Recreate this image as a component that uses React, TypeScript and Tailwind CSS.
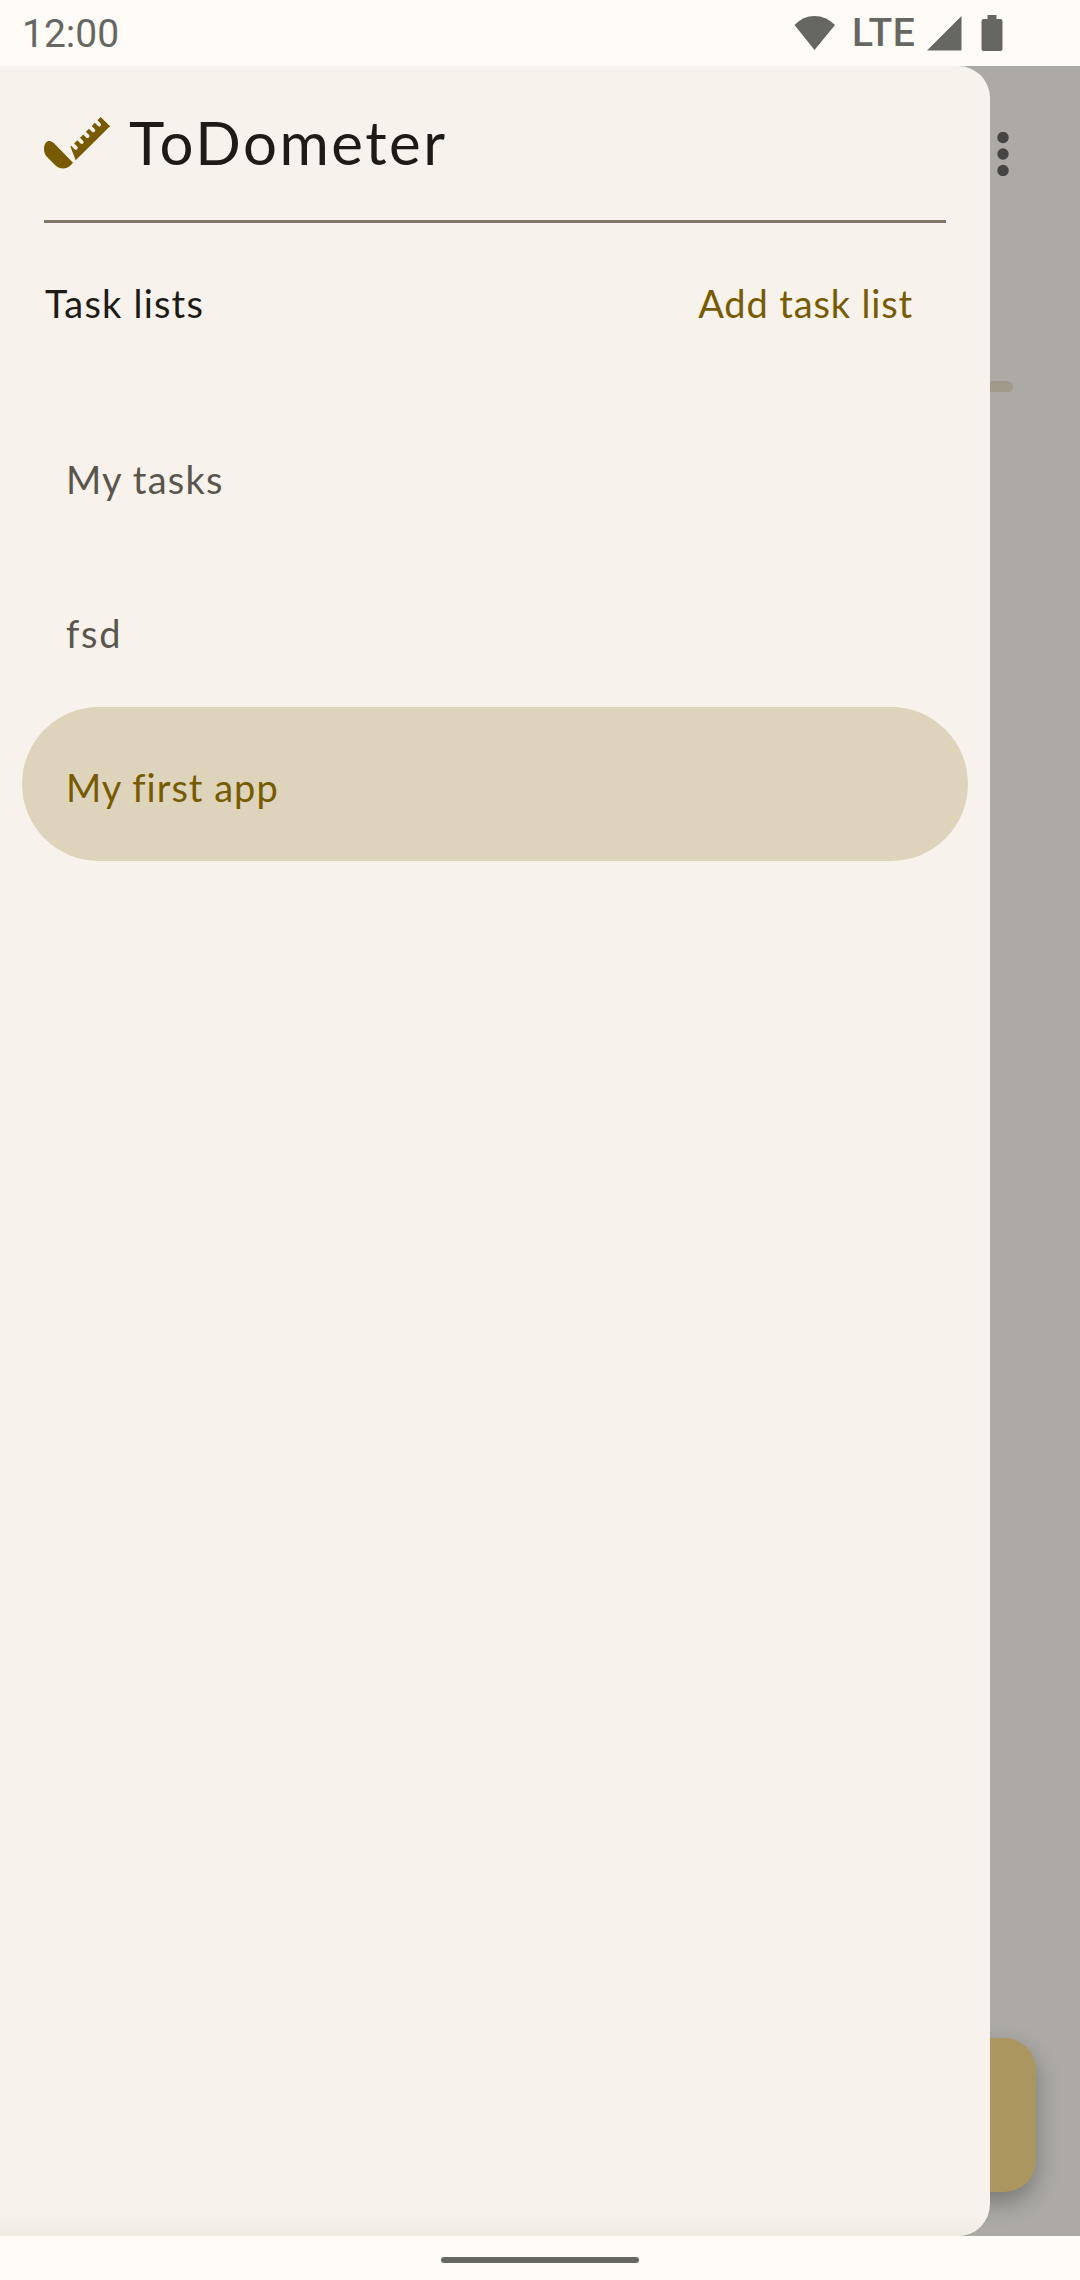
const quick = "font-['Lato',sans-serif]";

function LogoIcon() {
  return (
    <svg className="h-[52px] w-[66px] shrink-0 fill-[#785a00]" viewBox="42 51 198 156">
      <path d="M42 147C42 131 50 123 58 123C64 123 68 126 72 130L129 188L122 196C108 209 90 209 76 196L52 172C45 165 42 157 42 147Z" />
      <path d="M137 181L240 79L212 51l-9.500 9.500l9 9c5 6-2 13-8 8l-9-9l-9.500 9.500l9 9c5 6-2 13-8 8l-9-9l-9.500 9.500l9 9c5 6-2 13-8 8l-9-9l-9.500 9.500l9 9c5 6-2 13-8 8l-9-9l-9.500 9.500l9 9c5 6-2 13-8 8l-11-11l-1 4Z" />
    </svg>
  );
}

function StatusBar() {
  return (
    <header className="flex h-[66px] shrink-0 items-center pl-[22px] pr-[77px] font-['Roboto',sans-serif] text-[#666663]">
      <span className="pt-[3px] text-[39px] leading-none">12:00</span>
      <div className="ml-auto flex items-center">
        <svg className="h-[36px] w-[42px] fill-current" viewBox="0 0 42 36">
          <path d="M.5 10Q9 1 20.500 1T41 10L20.500 35Z" />
        </svg>
        <span className="ml-[16px] w-[68px] text-[39px] font-medium leading-none tracking-[0.300px]">LTE</span>
        <svg className="ml-[7px] h-[36px] w-[35px] fill-current" viewBox="0 0 35 36">
          <path d="M0 35.500L34.500 1V35.500Z" />
        </svg>
        <svg className="ml-[19px] h-[36px] w-[22px] fill-current" viewBox="0 0 22 36">
          <path d="M6.500 0h9v4H19.500a2 2 0 0 1 2 2v28a2 2 0 0 1-2 2h-17a2 2 0 0 1-2-2v-28a2 2 0 0 1 2-2h4Z" />
        </svg>
      </div>
    </header>
  );
}

const lists = [
  { name: "My tasks", spacing: "tracking-[1.200px]", selected: false },
  { name: "fsd", spacing: "tracking-[1.700px]", selected: false },
  { name: "My first app", spacing: "tracking-[1px]", selected: true },
];

function Drawer() {
  return (
    <aside className={`absolute inset-y-0 left-0 w-[990px] overflow-hidden rounded-r-[32px] bg-[#f7f2eb] ${quick}`}>
      <div className="mx-[44px] flex h-[157px] items-center border-b-[3px] border-[#7f7667]">
        <LogoIcon />
        <h1 className="ml-[19px] pb-[3px] text-[60px] leading-none tracking-[2.500px] text-[#1e1b16]">ToDometer</h1>
      </div>
      <div className="flex h-[176px] items-center justify-between pl-[45px] pr-[77px] pb-[17px] text-[38px] leading-none">
        <h2 className="tracking-[1.200px] text-[#1e1b16]">Task lists</h2>
        <button className="tracking-[0.850px] text-[#785a00]">Add task list</button>
      </div>
      <nav className="px-[22px]">
        {lists.map((l) => (
          <div
            key={l.name}
            className={`flex h-[154px] items-center rounded-full px-[44px] pt-[6px] text-[38px] leading-none ${l.spacing} ${
              l.selected ? "bg-[#ded4bc] text-[#785a00]" : "text-[#5a564e]"
            }`}
          >
            {l.name}
          </div>
        ))}
      </nav>
      <div className="absolute inset-x-0 bottom-0 h-[20px] bg-linear-to-b from-transparent to-[#efece3]" />
    </aside>
  );
}

export default function App() {
  return (
    <div className="flex h-[2280px] w-[1080px] flex-col overflow-hidden bg-[#fffcf7]">
      <StatusBar />
      <main className="relative flex-1 overflow-hidden bg-[#adaaa6]">
        <svg className="absolute left-[997px] top-[66px] h-[44px] w-[12px] fill-[#464543]" viewBox="0 0 12 44">
          <circle cx="6" cy="5.500" r="5.700" />
          <circle cx="6" cy="22" r="5.700" />
          <circle cx="6" cy="38.500" r="5.700" />
        </svg>
        <div className="absolute right-[67px] top-[315px] h-[11px] w-[900px] rounded-full bg-[#a1998a]" />
        <div className="absolute right-[44px] top-[1972px] h-[154px] w-[154px] rounded-[32px] bg-[#ac965f] shadow-[0_10px_24px_rgba(0,0,0,0.3)]" />
        <Drawer />
      </main>
      <footer className="flex h-[44px] shrink-0 items-start justify-center pt-[21px]">
        <div className="h-[6px] w-[198px] rounded-full bg-[#666663]" />
      </footer>
    </div>
  );
}
